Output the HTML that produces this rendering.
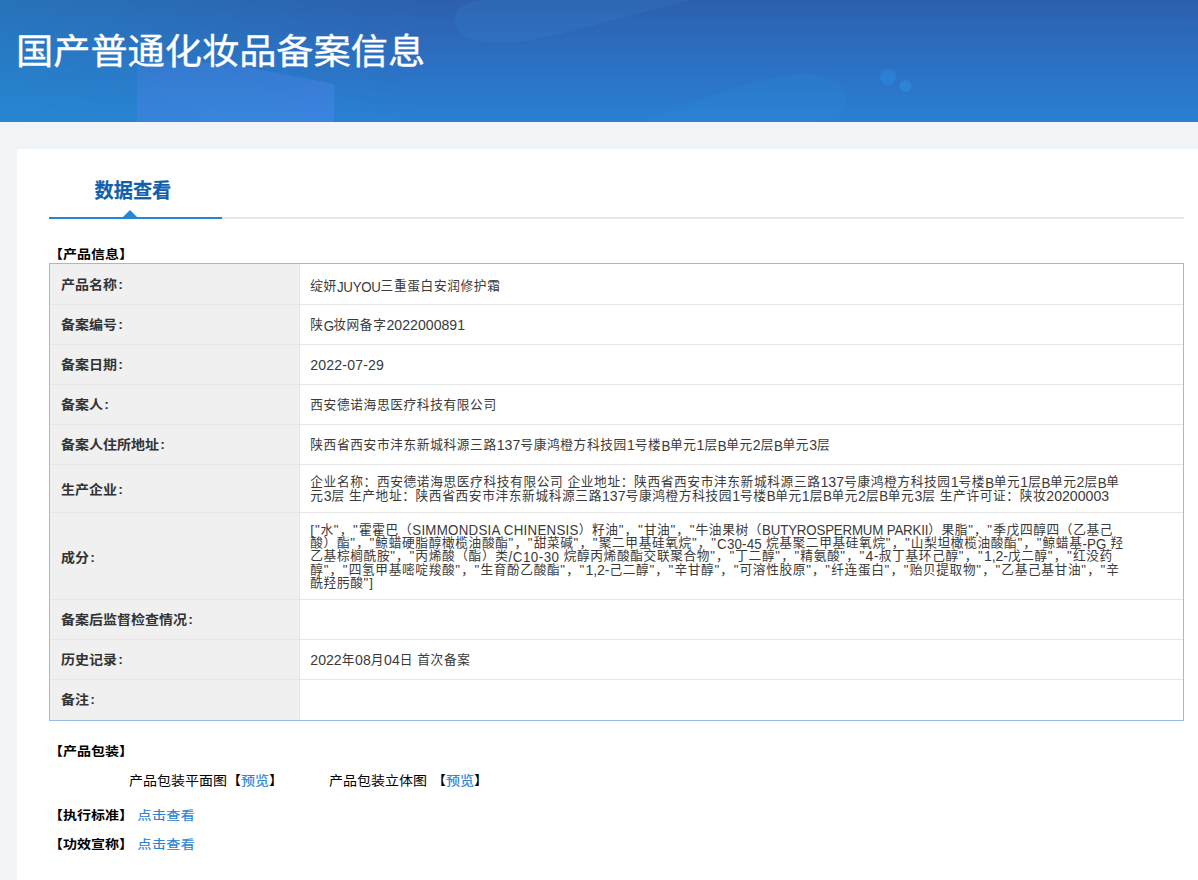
<!DOCTYPE html>
<html lang="zh-CN">
<head>
<meta charset="utf-8">
<title>国产普通化妆品备案信息</title>
<style>
*{box-sizing:border-box;margin:0;padding:0}
html,body{width:1198px;height:880px;overflow:hidden}
body{background:#f0f4f7;font-family:"Liberation Sans","Noto Sans CJK SC",sans-serif;color:#000;position:relative}
.banner{position:absolute;left:0;top:0;width:1198px;height:122px;overflow:hidden;
  background:linear-gradient(180deg,#2d5fad 0%,#2c6cc0 45%,#2980d0 100%)}
.banner svg{position:absolute;left:0;top:0}
.banner h1{position:absolute;left:16px;top:26px;font-size:37.2px;line-height:50px;font-weight:400;color:#fff;white-space:nowrap;-webkit-text-stroke:.35px #fff;transform:scaleY(.96);transform-origin:0 52%}
.panel{position:absolute;left:17px;top:149px;width:1200px;height:760px;background:#fff}
.tabs{position:absolute;left:32px;top:0;width:1135px;height:70px;border-bottom:2px solid #e6e8ea}
.tab{position:absolute;left:0;top:0;width:173px;height:70px;border-bottom:2px solid #2586d6;text-align:center;
  font-size:19.2px;font-weight:700;color:#125fac;line-height:85px;padding-right:5.2px;-webkit-text-stroke:.2px #125fac}
.tab span{display:inline-block;transform:scaleY(1.06);transform-origin:50% 60%}
.tab:after{content:"";position:absolute;left:74.3px;bottom:0;border:7px solid transparent;border-bottom:7px solid #2586d6;border-top:0}
.sec{position:absolute;left:32px;font-size:14px;font-weight:700;line-height:20px;white-space:nowrap;transform:translateY(.4px) scaleY(.89);transform-origin:0 60%}
.sec a{font-weight:400;margin-left:.6px;letter-spacing:.4px}
table{position:absolute;left:32px;top:114px;width:1135px;border-collapse:separate;border-spacing:0;border:1px solid #9bb9e6;font-size:13.33px;table-layout:fixed}
td{border-bottom:1px solid #e6e6e6;height:40px;padding:2px 10px 0 10.3px;vertical-align:middle;line-height:13.33px;color:#3a3a3a;white-space:nowrap;font-size:12.7px;letter-spacing:.63px}
td span{font-size:14.1px;line-height:0;position:relative;top:1px}
td span.q{font-size:13.33px;top:0}
td span.u{font-size:13.33px;display:inline-block;white-space:pre;transform:scaleY(1.05);top:1.7px}
td.l{width:250px;padding-top:2px;background:#f0f0f0;font-weight:700;font-size:14px;letter-spacing:0;color:#333;padding-left:11px;border-right:1px solid #e6e6e6;line-height:14px}
tr:first-child td{height:41px;padding-top:5px}
tr:first-child td.l{padding-top:3px}
tr:last-child td{border-bottom:0}
td.l b{display:inline-block;font-weight:700;transform:translateY(-1.1px) scaleY(.9);transform-origin:0 56%}
td.l i{font-style:normal;margin-left:1.3px}
a{color:#2a84d4;text-decoration:none;-webkit-text-stroke:.2px #2a84d4}
.row{position:absolute;font-size:14px;line-height:20px;white-space:nowrap;word-spacing:1px;transform:scaleY(.92);transform-origin:0 60%}
.s0{letter-spacing:-0.3px}
.s1{letter-spacing:-0.8px}
.s2{letter-spacing:0.02px}
.s3{letter-spacing:0.16px}
.s4{letter-spacing:-0.4px}
.s5{letter-spacing:0.9px}
.s6{letter-spacing:1.15px}
.s7{letter-spacing:0.25px}
.s8{letter-spacing:-0.2px}
.s9{letter-spacing:0.2px}
.s10{letter-spacing:0.15px}
.s11{letter-spacing:0.5px}
.s12{letter-spacing:0.46px}
.s13{letter-spacing:-0.07px}
</style>
</head>
<body>
<div class="banner">
  <svg width="1198" height="122" viewBox="0 0 1198 122" aria-hidden="true">
    <defs>
      <linearGradient id="bg" x1="0" y1="0" x2="0" y2="1">
        <stop offset="0" stop-color="#2c60ad"/>
        <stop offset="0.5" stop-color="#2c6fc2"/>
        <stop offset="1" stop-color="#2a80d2"/>
      </linearGradient>
      <linearGradient id="lf" x1="0" y1="0" x2="1" y2="0">
        <stop offset="0" stop-color="#1f93cf" stop-opacity=".35"/>
        <stop offset="1" stop-color="#1f93cf" stop-opacity="0"/>
      </linearGradient>
      <linearGradient id="blk" x1="0" y1="0" x2="0.6" y2="1">
        <stop offset="0" stop-color="#4a7fe0" stop-opacity=".3"/>
        <stop offset="1" stop-color="#4a86ea" stop-opacity=".52"/>
      </linearGradient>
    </defs>
    <rect width="1198" height="122" fill="url(#bg)"/>
    <rect width="420" height="122" fill="url(#lf)"/>
    <polygon points="137,60 230,64 334,84 334,122 137,122" fill="url(#blk)"/>
    <path d="M455,20 C455,5 470,0 490,0 L690,0 C620,18 560,36 520,42 C485,46 455,40 455,20 Z" fill="#50beff" fill-opacity=".08"/>
    <path d="M640,122 C700,100 760,76 800,74 C830,73 848,85 846,100 C845,112 835,118 820,122 Z" fill="#2f8fe0" fill-opacity=".18"/>
    <circle cx="888" cy="77" r="8" fill="#2d8fe6" fill-opacity=".45"/>
    <circle cx="905.5" cy="86" r="6" fill="#2d8fe6" fill-opacity=".55"/>
  </svg>

  <h1>国产普通化妆品备案信息</h1>
</div>
<div class="panel">
  <div class="tabs"><div class="tab"><span>数据查看</span></div></div>
  <div class="sec" style="top:95px">【产品信息】</div>
  <table>
    <tr><td class="l"><b>产品名称<i>:</i></b></td><td>绽妍<span class="s0 u">JUYOU</span>三重蛋白安润修护霜</td></tr>
    <tr><td class="l"><b>备案编号<i>:</i></b></td><td>陕<span class="s1 u">G</span>妆网备字<span class="s2">2022000891</span></td></tr>
    <tr><td class="l"><b>备案日期<i>:</i></b></td><td><span class="s3">2022-07-29</span></td></tr>
    <tr><td class="l"><b>备案人<i>:</i></b></td><td>西安德诺海思医疗科技有限公司</td></tr>
    <tr><td class="l"><b>备案人住所地址<i>:</i></b></td><td>陕西省西安市沣东新城科源三路<span class="s2">137</span>号康鸿橙方科技园<span class="s2">1</span>号楼<span class="s4 u">B</span>单元<span class="s2">1</span>层<span class="s4 u">B</span>单元<span class="s2">2</span>层<span class="s4 u">B</span>单元<span class="s2">3</span>层</td></tr>
    <tr><td class="l" style="height:48px;padding-top:4px"><b>生产企业<i>:</i></b></td><td>企业名称：西安德诺海思医疗科技有限公司 企业地址：陕西省西安市沣东新城科源三路<span class="s2">137</span>号康鸿橙方科技园<span class="s2">1</span>号楼<span class="s4 u">B</span>单元<span class="s2">1</span>层<span class="s4 u">B</span>单元<span class="s2">2</span>层<span class="s4 u">B</span>单<br>元<span class="s2">3</span>层 生产地址：陕西省西安市沣东新城科源三路<span class="s2">137</span>号康鸿橙方科技园<span class="s2">1</span>号楼<span class="s4 u">B</span>单元<span class="s2">1</span>层<span class="s4 u">B</span>单元<span class="s2">2</span>层<span class="s4 u">B</span>单元<span class="s2">3</span>层 生产许可证：陕妆<span class="s2">20200003</span></td></tr>
    <tr><td class="l" style="height:87px;padding-top:5px"><b>成分<i>:</i></b></td><td><span class="s5 q">["</span>水<span class="s6 q">"</span>，<span class="s6 q">"</span>霍霍巴（<span class="s7 u">SIMMONDSIA CHINENSIS</span>）籽油<span class="s6 q">"</span>，<span class="s6 q">"</span>甘油<span class="s6 q">"</span>，<span class="s6 q">"</span>牛油果树（<span class="s8 u">BUTYROSPERMUM PARKII</span>）果脂<span class="s6 q">"</span>，<span class="s6 q">"</span>季戊四醇四（乙基己<br>酸）酯<span class="s6 q">"</span>，<span class="s6 q">"</span>鲸蜡硬脂醇橄榄油酸酯<span class="s6 q">"</span>，<span class="s6 q">"</span>甜菜碱<span class="s6 q">"</span>，<span class="s6 q">"</span>聚二甲基硅氧烷<span class="s6 q">"</span>，<span class="s6 q">"</span><span class="s9 u">C30-45 </span>烷基聚二甲基硅氧烷<span class="s6 q">"</span>，<span class="s6 q">"</span>山梨坦橄榄油酸酯<span class="s6 q">"</span>，<span class="s6 q">"</span>鲸蜡基<span class="s10 u">-PG </span>羟<br>乙基棕榈酰胺<span class="s6 q">"</span>，<span class="s6 q">"</span>丙烯酸（酯）类<span class="s11 u">/C10-30 </span>烷醇丙烯酸酯交联聚合物<span class="s6 q">"</span>，<span class="s6 q">"</span>丁二醇<span class="s6 q">"</span>，<span class="s6 q">"</span>精氨酸<span class="s6 q">"</span>，<span class="s6 q">"</span><span class="s12">4-</span>叔丁基环己醇<span class="s6 q">"</span>，<span class="s6 q">"</span><span class="s13">1,2-</span>戊二醇<span class="s6 q">"</span>，<span class="s6 q">"</span>红没药<br>醇<span class="s6 q">"</span>，<span class="s6 q">"</span>四氢甲基嘧啶羧酸<span class="s6 q">"</span>，<span class="s6 q">"</span>生育酚乙酸酯<span class="s6 q">"</span>，<span class="s6 q">"</span><span class="s13">1,2-</span>己二醇<span class="s6 q">"</span>，<span class="s6 q">"</span>辛甘醇<span class="s6 q">"</span>，<span class="s6 q">"</span>可溶性胶原<span class="s6 q">"</span>，<span class="s6 q">"</span>纤连蛋白<span class="s6 q">"</span>，<span class="s6 q">"</span>贻贝提取物<span class="s6 q">"</span>，<span class="s6 q">"</span>乙基己基甘油<span class="s6 q">"</span>，<span class="s6 q">"</span>辛<br>酰羟肟酸<span class="s5 q">"]</span></td></tr>
    <tr><td class="l"><b>备案后监督检查情况<i>:</i></b></td><td></td></tr>
    <tr><td class="l"><b>历史记录<i>:</i></b></td><td><span class="s2">2022</span>年<span class="s2">08</span>月<span class="s2">04</span>日 首次备案</td></tr>
    <tr><td class="l"><b>备注<i>:</i></b></td><td></td></tr>
  </table>
  <div class="sec" style="top:592px">【产品包装】</div>
  <div class="row" style="left:112px;top:621px">产品包装平面图【<a>预览</a>】</div>
  <div class="row" style="left:312px;top:621px">产品包装立体图 【<a>预览</a>】</div>
  <div class="sec" style="top:656px">【执行标准】 <a>点击查看</a></div>
  <div class="sec" style="top:685px">【功效宣称】 <a>点击查看</a></div>
</div>
</body>
</html>
